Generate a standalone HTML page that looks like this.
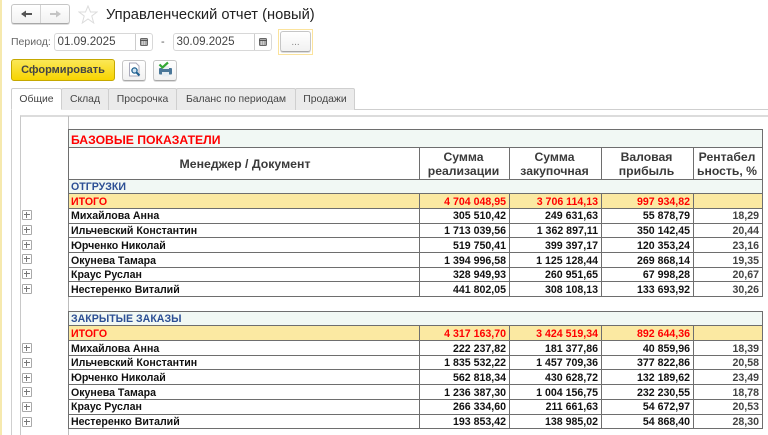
<!DOCTYPE html>
<html lang="ru"><head><meta charset="utf-8"><title>Управленческий отчет (новый)</title>
<style>
html,body{margin:0;padding:0;background:#fff}
#p{position:relative;width:768px;height:435px;overflow:hidden;background:#fff;font-family:"Liberation Sans",sans-serif;filter:blur(.3px)}
.a{position:absolute;box-sizing:border-box}
.t{position:absolute;white-space:nowrap}
.btn{position:absolute;box-sizing:border-box;border:1px solid #c6c6c6;border-bottom-color:#a8a8a8;border-radius:3px;background:linear-gradient(#fff,#f1f1f1);box-shadow:0 1px 0 #ddd}
.inp{position:absolute;box-sizing:border-box;border:1px solid #d8d8d8;border-radius:3px;background:#fff;height:18px;top:33px;width:99px;font-size:11.6px;line-height:16px;padding-left:2.5px;color:#444}
.inp i{position:absolute;left:80px;top:0;width:1px;height:16px;background:#ccc}
.tab{position:absolute;box-sizing:border-box;top:88px;height:22px;background:#ebebeb;border:1px solid #cfcfcf;border-bottom:0;font-size:10.4px;color:#444;text-align:center;line-height:21px;border-radius:2px 2px 0 0}
table{position:absolute;left:68px;top:129px;border-collapse:collapse;table-layout:fixed;width:694px;font-size:10.6px;font-weight:bold;color:#111}
td{border:1px solid #6e6e6e;padding:1.5px 3px 0 2px;height:14.7px;line-height:12px;white-space:nowrap;box-sizing:border-box;overflow:hidden}
tr{height:14.7px}
td.n{text-align:right}
td.g{color:#444}
tr.i td{background:#fbe9a2;color:#f00}
tr.s td{background:#f1f8f4;color:#2c4f94}
tr.e td{border-left:0;border-right:0;background:#fff}
tr.h td{color:#3a3a3a;text-align:center;font-size:12.2px;line-height:14.5px;padding:1.5px 2px 0 0}
tr.h td:first-child{padding:1.5px 0 0 2px;font-size:12.3px}
.pl{position:absolute;left:22px;width:10px;height:10px;box-sizing:border-box;border:1px solid #a9a9a9;background:#fff;border-radius:1px}
.pl:before{content:"";position:absolute;left:1px;right:1px;top:3px;height:1px;background:#777}
.pl:after{content:"";position:absolute;top:1px;bottom:1px;left:3px;width:1px;background:#777}
</style></head><body><div id="p">
<div class="a" style="left:0;top:0;width:2px;height:435px;background:#f6e9ae"></div>

<div class="btn" style="left:11px;top:4px;width:59px;height:20px"></div>
<div class="a" style="left:40px;top:5px;width:1px;height:18px;background:#d4d4d4"></div>
<svg class="a" style="left:20px;top:9px" width="13" height="10" viewBox="0 0 13 10"><path d="M2 5H12" stroke="#555" stroke-width="2"/><path d="M1 5L6 1.500V8.500Z" fill="#555"/></svg>
<svg class="a" style="left:49px;top:9px" width="13" height="10" viewBox="0 0 13 10"><path d="M1 5H10" stroke="#c4c4c4" stroke-width="2"/><path d="M12 5L7 1.500V8.500Z" fill="#c4c4c4"/></svg>
<svg class="a" style="left:78px;top:5px" width="20" height="19" viewBox="0 0 20 19"><path d="M10 1L12.500 7H19L13.800 11L15.700 18L10 14L4.300 18L6.200 11L1 7H7.500Z" fill="#fff" stroke="#dcdcdc"/></svg>
<div class="t" style="left:106px;top:5px;font-size:14.7px;line-height:20px;color:#222">Управленческий отчет (новый)</div>

<div class="t" style="left:11px;top:36px;font-size:10.5px;line-height:13px;color:#666">Период:</div>
<div class="inp" style="left:54px">01.09.2025<i></i></div>
<svg class="a" style="left:139px;top:37px" width="10" height="10" viewBox="0 0 10 10"><rect x="1.500" y="1.500" width="7" height="7" rx="1" fill="#aaa" stroke="#666"/><path d="M1 3.500H9" stroke="#555"/><path d="M3 5H7M3 7H7" stroke="#eee" stroke-dasharray="1 1"/></svg>
<div class="t" style="left:161px;top:36px;font-size:11px;line-height:13px;color:#555">-</div>
<div class="inp" style="left:173px">30.09.2025<i></i></div>
<svg class="a" style="left:258px;top:37px" width="10" height="10" viewBox="0 0 10 10"><rect x="1.500" y="1.500" width="7" height="7" rx="1" fill="#aaa" stroke="#666"/><path d="M1 3.500H9" stroke="#555"/><path d="M3 5H7M3 7H7" stroke="#eee" stroke-dasharray="1 1"/></svg>
<div class="a" style="left:278px;top:29px;width:35px;height:26px;border:1px solid #fbe39c;background:#fff"></div>
<div class="btn" style="left:280px;top:31px;width:31px;height:21px;font-size:10px;line-height:22px;text-align:center;color:#888">...</div>

<div class="a" style="left:11px;top:59px;width:104px;height:22px;border:1px solid #c5a800;border-radius:3px;background:linear-gradient(#fbe757,#f7d400);font-size:11px;font-weight:bold;line-height:20px;text-align:center;color:#444">Сформировать</div>
<div class="btn" style="left:122px;top:60px;width:24px;height:21px"></div>
<svg class="a" style="left:127px;top:62px" width="15" height="16" viewBox="0 0 15 16"><path d="M2.500 1H9L12 4V14H2.500Z" fill="#fff" stroke="#aab"/><circle cx="7.500" cy="8.500" r="2.600" fill="#cfe3f2" stroke="#1d5f8f" stroke-width="1.300"/><path d="M9.500 10.500L12.500 13.500" stroke="#1d5f8f" stroke-width="2"/></svg>
<div class="btn" style="left:153px;top:60px;width:24px;height:21px"></div>
<svg class="a" style="left:157px;top:61px" width="17" height="17" viewBox="0 0 17 17"><rect x="2" y="7" width="13" height="6.500" rx="1" fill="#4a7799"/><rect x="5" y="5" width="7" height="3" fill="#e9eef2"/><rect x="5" y="11" width="7" height="4.500" fill="#e6edf2"/><path d="M2.500 3.500L5.500 6.500L11 1.500" fill="none" stroke="#35a835" stroke-width="2.200"/></svg>

<div class="a" style="left:11px;top:109px;width:757px;height:326px;border-top:1px solid #cfcfcf;border-left:1px solid #cfcfcf"></div>
<div class="tab" style="left:61px;width:48px">Склад</div>
<div class="tab" style="left:108px;width:69px">Просрочка</div>
<div class="tab" style="left:176px;width:120px">Баланс по периодам</div>
<div class="tab" style="left:295px;width:60px">Продажи</div>
<div class="tab" style="left:11px;width:51px;background:#fff;height:22px;line-height:21px;z-index:2;border-bottom:1px solid #fff">Общие</div>

<div class="a" style="left:20px;top:115px;width:748px;height:320px;border-top:2px solid #dcdcdc;border-left:1px solid #c8c8c8"></div>
<div class="a" style="left:68px;top:116px;width:1px;height:319px;background:#bdbdbd"></div>

<table>
<colgroup><col style="width:351px"><col style="width:90px"><col style="width:92px"><col style="width:92px"><col style="width:69px"></colgroup>
<tr style="height:18px"><td colspan="5" style="height:18px;background:#f1f8f4;color:#f00;font-size:12.2px;padding-top:3px">БАЗОВЫЕ ПОКАЗАТЕЛИ</td></tr>
<tr class="h" style="height:31.5px"><td style="height:31.5px">Менеджер / Документ</td><td>Сумма<br>реализации</td><td>Сумма<br>закупочная</td><td>Валовая<br>прибыль</td><td>Рентабел<br>ьность, %</td></tr>
<tr class="s"><td colspan="5">ОТГРУЗКИ</td></tr>
<tr class="i"><td>ИТОГО</td><td class="n">4 704 048,95</td><td class="n">3 706 114,13</td><td class="n">997 934,82</td><td></td></tr>
<tr><td>Михайлова Анна</td><td class="n">305 510,42</td><td class="n">249 631,63</td><td class="n">55 878,79</td><td class="n g">18,29</td></tr>
<tr><td>Ильчевский Константин</td><td class="n">1 713 039,56</td><td class="n">1 362 897,11</td><td class="n">350 142,45</td><td class="n g">20,44</td></tr>
<tr><td>Юрченко Николай</td><td class="n">519 750,41</td><td class="n">399 397,17</td><td class="n">120 353,24</td><td class="n g">23,16</td></tr>
<tr><td>Окунева Тамара</td><td class="n">1 394 996,58</td><td class="n">1 125 128,44</td><td class="n">269 868,14</td><td class="n g">19,35</td></tr>
<tr><td>Краус Руслан</td><td class="n">328 949,93</td><td class="n">260 951,65</td><td class="n">67 998,28</td><td class="n g">20,67</td></tr>
<tr><td>Нестеренко Виталий</td><td class="n">441 802,05</td><td class="n">308 108,13</td><td class="n">133 693,92</td><td class="n g">30,26</td></tr>
<tr class="e"><td colspan="5"></td></tr>
<tr class="s"><td colspan="5">ЗАКРЫТЫЕ ЗАКАЗЫ</td></tr>
<tr class="i"><td>ИТОГО</td><td class="n">4 317 163,70</td><td class="n">3 424 519,34</td><td class="n">892 644,36</td><td></td></tr>
<tr><td>Михайлова Анна</td><td class="n">222 237,82</td><td class="n">181 377,86</td><td class="n">40 859,96</td><td class="n g">18,39</td></tr>
<tr><td>Ильчевский Константин</td><td class="n">1 835 532,22</td><td class="n">1 457 709,36</td><td class="n">377 822,86</td><td class="n g">20,58</td></tr>
<tr><td>Юрченко Николай</td><td class="n">562 818,34</td><td class="n">430 628,72</td><td class="n">132 189,62</td><td class="n g">23,49</td></tr>
<tr><td>Окунева Тамара</td><td class="n">1 236 387,30</td><td class="n">1 004 156,75</td><td class="n">232 230,55</td><td class="n g">18,78</td></tr>
<tr><td>Краус Руслан</td><td class="n">266 334,60</td><td class="n">211 661,63</td><td class="n">54 672,97</td><td class="n g">20,53</td></tr>
<tr><td>Нестеренко Виталий</td><td class="n">193 853,42</td><td class="n">138 985,02</td><td class="n">54 868,40</td><td class="n g">28,30</td></tr>
</table>

<div class="pl" style="top:210px"></div><div class="pl" style="top:225px"></div><div class="pl" style="top:240px"></div><div class="pl" style="top:254px"></div><div class="pl" style="top:269px"></div><div class="pl" style="top:284px"></div>
<div class="pl" style="top:343px"></div><div class="pl" style="top:358px"></div><div class="pl" style="top:373px"></div><div class="pl" style="top:387px"></div><div class="pl" style="top:402px"></div><div class="pl" style="top:417px"></div>
</div></body></html>
